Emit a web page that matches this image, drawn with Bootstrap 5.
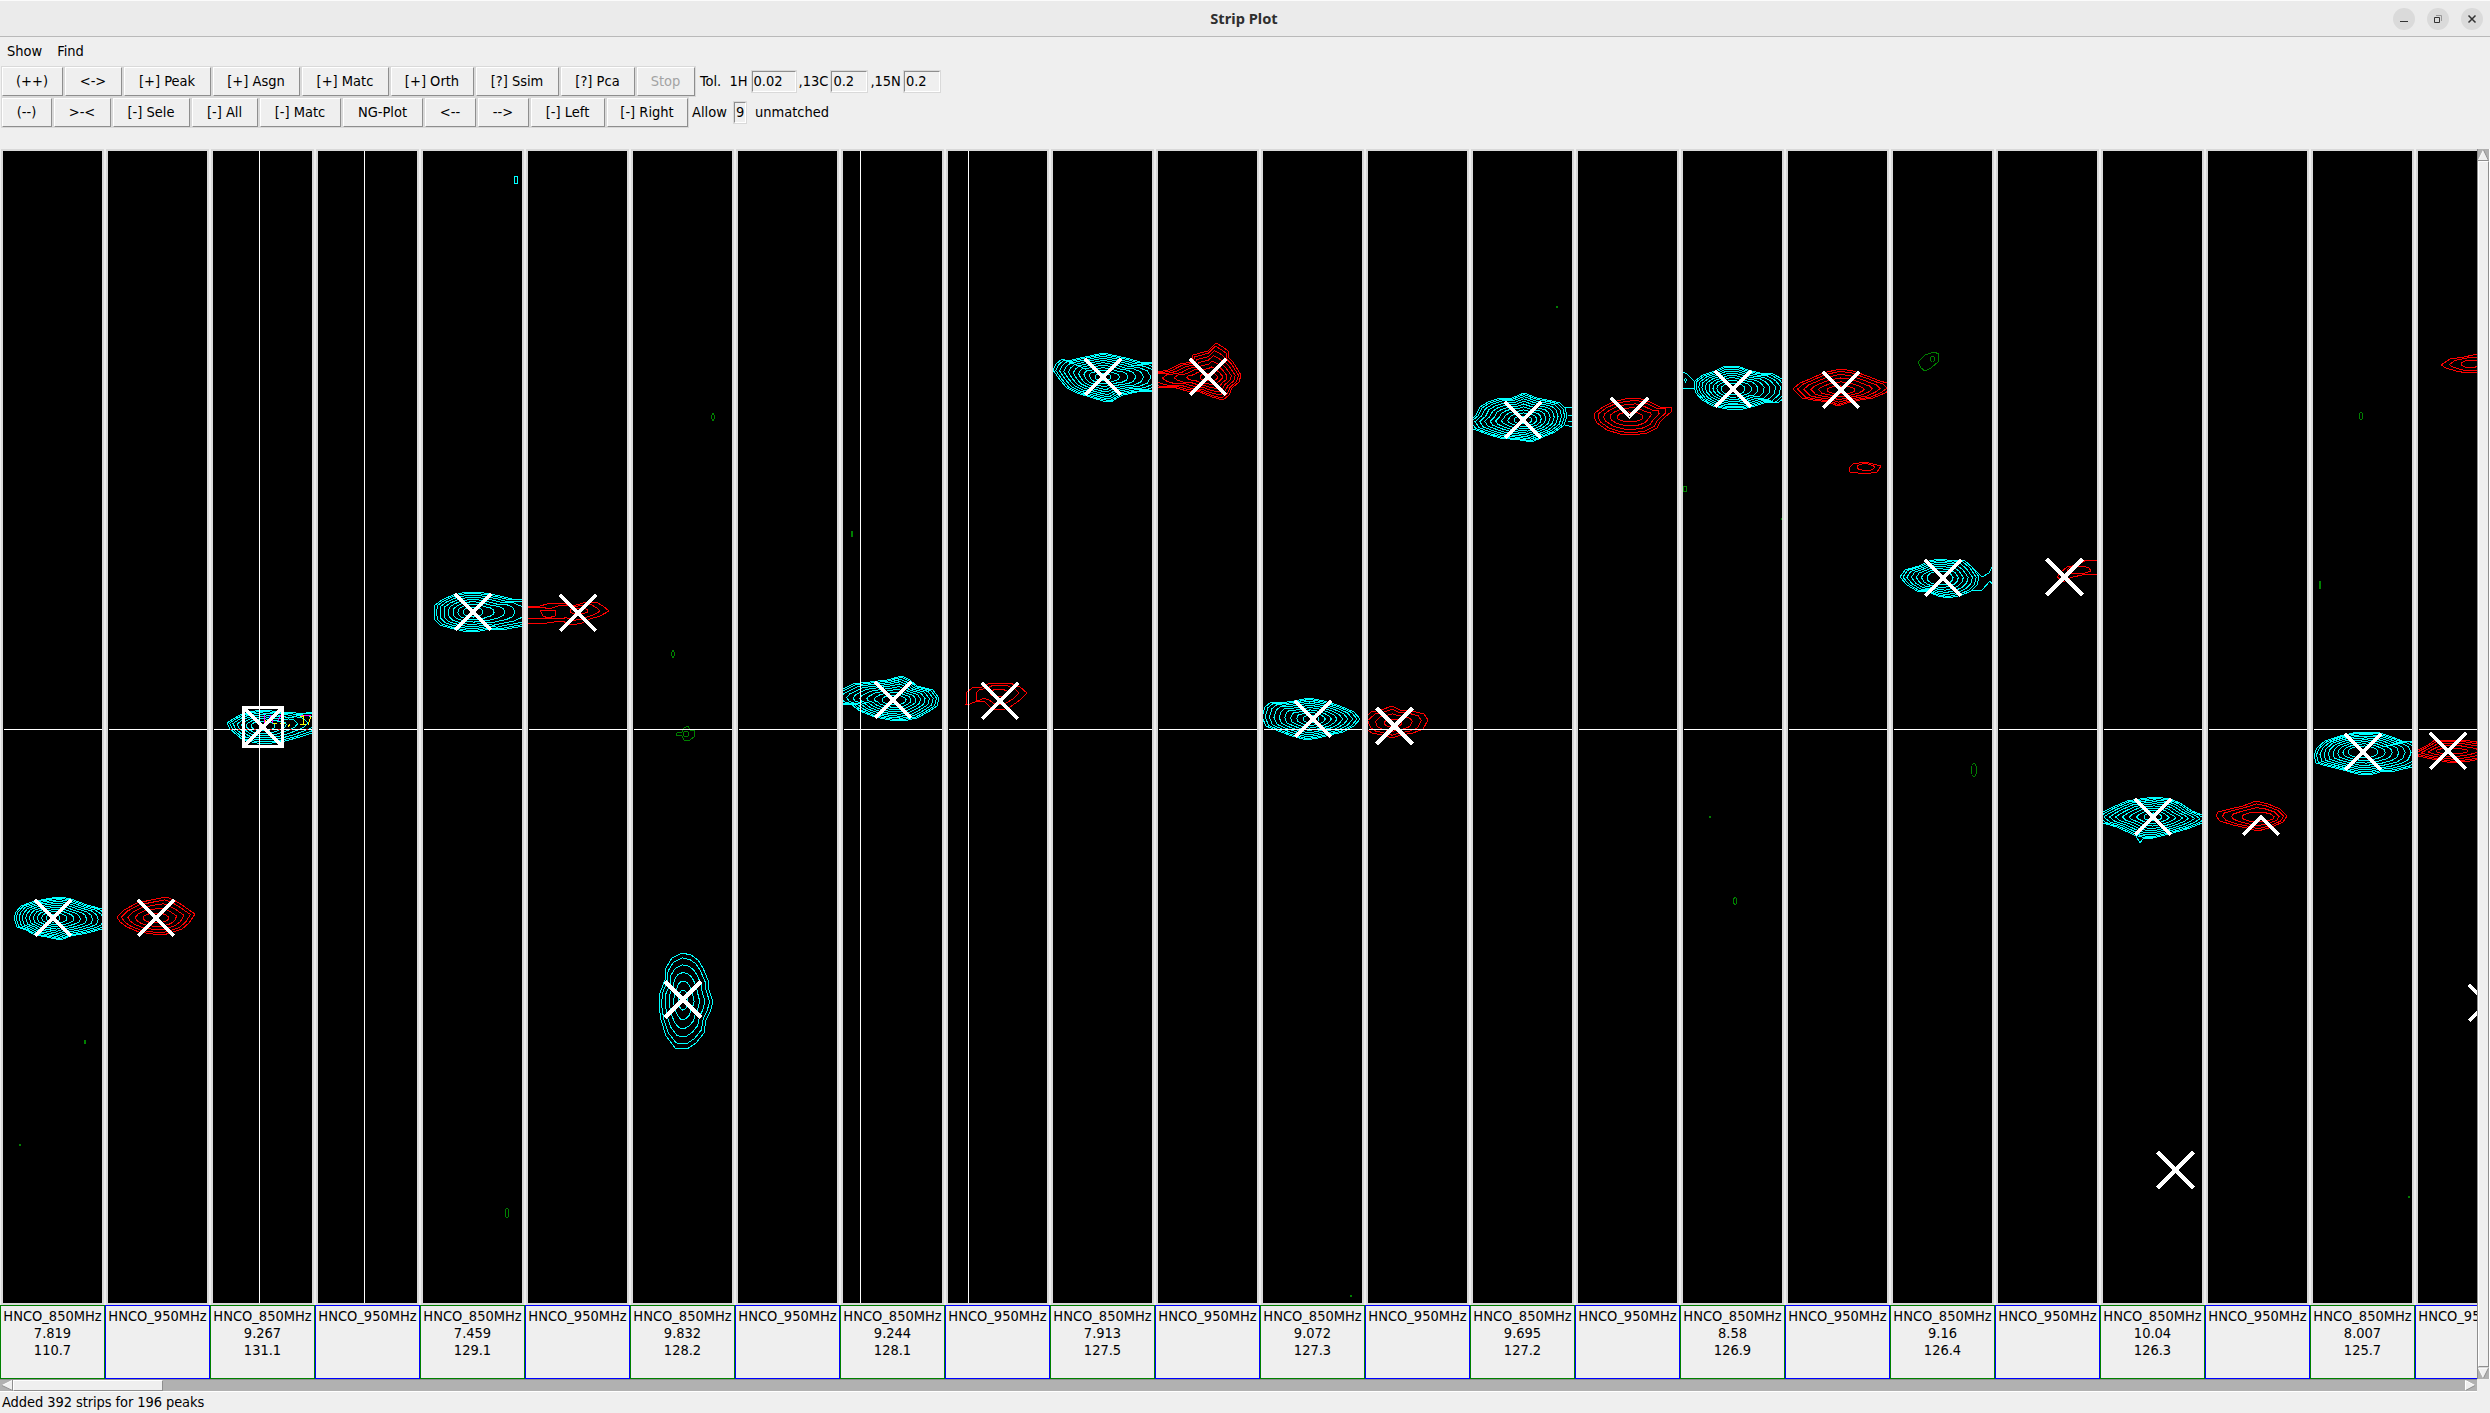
<!DOCTYPE html>
<html lang="en">
<head>
<meta charset="utf-8">
<title>Strip Plot</title>
<link href="https://cdn.jsdelivr.net/npm/bootstrap@5.3.0/dist/css/bootstrap.min.css" rel="stylesheet">
<style>
body{background:#efefef;color:#000;font:14.5px/17px "DejaVu Sans Condensed","DejaVu Sans",sans-serif;width:2490px;height:1413px;overflow:hidden}
.titlebar{height:37px;background:#ebebeb;border-top:1px solid #fbfbfb;border-bottom:1px solid #b9b9b9;padding:0 7px 0 0}
.title-text{font:bold 14.67px/33px "Noto Sans",sans-serif;color:#2f2f2f;padding:0 0 1px 95px}
.wbtn{width:22px;height:22px;background:#dadada}
.menus{height:29px;padding:0 0 0 7px;gap:15px}
.tools{height:31px;padding-left:1px}
.tkb{height:31px;border:1px solid #d9d9d9;background:#efefef;padding:0;flex:none}
.tkb>span{display:flex;height:29px;align-items:center;justify-content:center;border:1px solid;border-color:#fff #8e8e8e #8e8e8e #fff;padding:0 1px 0 0}
.tkb.off{color:#a3a3a3}
.w52{width:52px}.w53{width:53px}.w59{width:59px}.w60{width:60px}.w63{width:63px}.w68{width:68px}.w76{width:76px}.w79{width:79px}.w82{width:82px}.w83{width:83px}.w85{width:85px}.w89{width:89px}
.ent{height:23px;border:1px solid #d9d9d9;flex:none}
.ent>span{display:block;height:21px;line-height:19px;border:1px solid;border-color:#8e8e8e #fff #fff #8e8e8e;padding-left:1px}
.e1{width:46px}.e2{width:38px}.e3{width:14px}
.tol .ent{margin:0 2px}
.tol .e1{margin-left:3px}
.allow{margin-left:3px;margin-right:2px}
.work{margin-top:21px;height:1230px}
.strips{width:2477px;overflow:hidden}
.strip-col{width:105px}
.plot{width:103px;height:1156px;margin:0 1px;border:2px solid #d9d9d9;background:#000}
.plot svg{display:block}
.tag{height:74px;width:105px;border:1px solid #00f;padding-top:2px;white-space:nowrap;overflow:hidden}
.tag.k850{border-color:#008000}
.vbar{width:13px;background:#b1b1b1;border-left:1px solid #8e8e8e;border-right:1px solid #fff}
.vthumb{background:#efefef;border:1px solid;border-color:#fff #8e8e8e #8e8e8e #fff}
.hbar{height:13px;width:2477px;background:#b1b1b1;border-top:1px solid #8e8e8e;border-bottom:1px solid #fff}
.hthumb{width:150px;background:#efefef;border:1px solid;border-color:#fff #8e8e8e #8e8e8e #fff}
.status{padding:2px 0 0 2px;letter-spacing:-.08px}
svg{flex:none}
</style>
</head>
<body class="d-flex flex-column">
<header class="titlebar d-flex align-items-center">
  <div class="title-text flex-grow-1 text-center">Strip Plot</div>
  <div class="d-flex gap-2">
    <span class="wbtn rounded-circle me-1"><svg width="22" height="22" class="d-block"><path d="M7 13.5h8" stroke="#333"/></svg></span>
    <span class="wbtn rounded-circle me-1"><svg width="22" height="22" class="d-block" fill="none"><path d="M9 7.500h5.500v5.500" stroke="#999"/><path d="M7.500 9.500h5v5h-5z" stroke="#333"/></svg></span>
    <span class="wbtn rounded-circle"><svg width="22" height="22" class="d-block"><path d="M7.500 7.500l7 7m0-7l-7 7" stroke="#333" stroke-width="1.500"/></svg></span>
  </div>
</header>
<nav class="menus d-flex align-items-center"><span>Show</span><span>Find</span></nav>
<div class="tools tol d-flex align-items-center">
  <div class="tkb w63"><span>(++)</span></div><div class="tkb w59"><span>&lt;-&gt;</span></div><div class="tkb w89"><span>[+] Peak</span></div><div class="tkb w89"><span>[+] Asgn</span></div><div class="tkb w89"><span>[+] Matc</span></div><div class="tkb w85"><span>[+] Orth</span></div><div class="tkb w85"><span>[?] Ssim</span></div><div class="tkb w76"><span>[?] Pca</span></div><div class="tkb w60 off"><span>Stop</span></div>
  <span class="ms-1">Tol.&nbsp;</span><span class="ms-1">1H</span><div class="ent e1"><span>0.02</span></div><span>,13C</span><div class="ent e2"><span>0.2</span></div><span>,15N</span><div class="ent e2"><span>0.2</span></div>
</div>
<div class="tools d-flex align-items-center">
  <div class="tkb w52"><span>(--)</span></div><div class="tkb w59"><span>&gt;-&lt;</span></div><div class="tkb w79"><span>[-] Sele</span></div><div class="tkb w68"><span>[-] All</span></div><div class="tkb w83"><span>[-] Matc</span></div><div class="tkb w82"><span>NG-Plot</span></div><div class="tkb w53"><span>&lt;--</span></div><div class="tkb w53"><span>--&gt;</span></div><div class="tkb w76"><span>[-] Left</span></div><div class="tkb w83"><span>[-] Right</span></div>
  <span class="allow">Allow&nbsp;</span><div class="ent e3 me-1"><span>9</span></div><span class="ps-1">unmatched</span>
</div>
<main class="work d-flex">
  <div class="strips d-flex" id="strips"></div>
  <div class="vbar d-flex flex-column">
    <svg width="11" height="12"><path d="M5.500 1L10.500 11H.5z" fill="#efefef"/><path d="M5.500 1L.5 11" stroke="#fff"/><path d="M5.500 1l5 10.500H0" fill="none" stroke="#8e8e8e"/></svg>
    <div class="vthumb flex-grow-1"></div>
    <svg width="11" height="12"><path d="M.5 1h10L5.500 11z" fill="#efefef"/><path d="M10.500 1H.5L5.500 11" fill="none" stroke="#fff"/><path d="M10.500 1L5.500 11" stroke="#8e8e8e"/></svg>
  </div>
</main>
<div class="hbar d-flex">
  <svg width="13" height="11"><path d="M2 5.500L12 .5v10z" fill="#efefef"/><path d="M2 5.500L12 .5" stroke="#fff"/><path d="M12.500 0v10.500L2 5.500" fill="none" stroke="#8e8e8e"/></svg>
  <div class="hthumb"></div>
  <svg width="13" height="11" class="ms-auto"><path d="M1.500 .5v10L11 5.500z" fill="#efefef"/><path d="M11 5.500L1.500 .5v10" fill="none" stroke="#fff"/><path d="M1.500 10.500L11 5.500" stroke="#8e8e8e"/></svg>
</div>
<footer class="status">Added 392 strips for 196 peaks</footer>
<script src="https://cdn.jsdelivr.net/npm/bootstrap@5.3.0/dist/js/bootstrap.bundle.min.js"></script>
<script>
const C='#00ffff',R='#ff0000',G='#008000';
const tags=[['7.819','110.7'],['9.267','131.1'],['7.459','129.1'],['9.832','128.2'],['9.244','128.1'],['7.913','127.5'],['9.072','127.3'],['9.695','127.2'],['8.58','126.9'],['9.16','126.4'],['10.04','126.3'],['8.007','125.7']];
// Peaks: strip, colour, level count, centre, innermost radii, outermost level
const peaks=[
[0,C,10,[53,918],[7,4],'14,918 16,912 21,906 35,901 52,898 61,897 71,899 87,905 102,909 109,914 111,920 109,926 102,929 87,933 71,936 60,940 47,937 35,935 26,930 17,927'],
[1,R,5,[156,918],[13,5],'117,917 124,910 137,903 156,899 166,897 174,900 182,905 195,914 189,923 182,929 170,933 163,935 153,934 139,932 127,927 120,922'],
[2,C,7,[263,726],[12,5],'227,723 233,719 240,715 250,712 260,710 272,711 283,713 292,712 300,714 312,712 325,714 332,721 325,728 312,733 300,737 285,741 272,743 257,743 243,740 237,735 230,729'],
[4,C,8,[473,612],[10,5],'434,613 435,605 442,600 453,595 467,592 477,592 490,594 500,596 512,599 530,599 542,604 547,612 542,620 530,625 512,628 502,630 490,629 475,632 463,631 450,628 440,625 435,620'],
[5,R,3,[579,611],[9,3],'480,604 525,606 537,607 550,603 563,603 573,606 583,603 596,602 603,606 609,611 600,616 590,619 582,623 572,625 562,621 547,623 528,623 480,624'],
[6,C,6,[683,1000],[5,10],'659,1005 660,993 665,980 666,968 672,958 682,953 691,955 698,960 703,968 708,980 709,990 713,1002 710,1012 706,1020 704,1033 696,1043 687,1049 675,1048 666,1036 661,1020'],
[8,C,9,[894,700],[12,5],'832,697 836,692 843,689 853,684 870,682 887,680 902,676 910,680 917,686 933,690 939,698 937,706 928,712 917,718 903,721 890,720 875,717 860,711 852,705 843,704 836,702'],
[9,R,3,[999,693],[9,4],'966,704 967,692 972,688 982,687 990,683 1010,683 1020,687 1027,693 1020,700 1010,707 1002,710 992,709 985,702 977,701 970,704'],
[10,C,10,[1103,377],[8,4],'1053,370 1056,364 1062,359 1068,361 1080,358 1090,356 1103,353 1117,356 1130,359 1140,362 1155,363 1168,368 1174,377 1168,386 1155,391 1137,392 1123,395 1117,398 1111,402 1103,401 1090,397 1077,393 1067,388 1060,380'],
[11,R,7,[1209,377],[9,4],'1135,379 1143,373 1158,372 1168,370 1180,364 1192,362 1193,355 1208,351 1216,343 1223,347 1228,351 1228,357 1233,362 1241,375 1239,382 1232,388 1229,395 1223,400 1212,397 1200,392 1187,391 1173,387 1158,388 1143,384'],
[12,C,9,[1311,719],[8,4],'1262,717 1265,707 1271,702 1280,703 1294,701 1309,698 1324,701 1340,706 1354,712 1360,719 1354,726 1343,732 1330,735 1318,738 1307,740 1292,736 1278,731 1266,726'],
[13,R,4,[1393,723],[9,4],'1362,720 1371,712 1381,710 1392,706 1400,710 1412,711 1424,714 1428,720 1423,729 1413,733 1401,735 1392,738 1382,735 1372,733 1366,729'],
[14,C,10,[1523,420],[9,4],'1468,422 1476,415 1480,407 1488,402 1500,398 1512,398 1524,393 1537,398 1552,401 1560,403 1565,408 1567,416 1564,425 1555,432 1543,437 1532,442 1520,440 1500,438 1487,434 1473,429'],
[15,R,5,[1630,417],[13,5],'1594,417 1595,413 1603,407 1613,402 1625,399 1638,398 1650,402 1660,407 1671,407 1671,412 1665,417 1660,422 1657,428 1647,433 1633,435 1620,434 1607,430 1597,423'],
[16,C,9,[1733,389],[12,6],'1694,387 1695,381 1703,375 1715,371 1725,366 1737,366 1748,370 1760,373 1773,374 1782,379 1788,386 1787,395 1778,403 1767,402 1755,406 1743,409 1727,409 1713,406 1702,400 1696,393'],
[17,R,6,[1841,390],[14,4],'1793,389 1800,383 1810,379 1823,373 1840,369 1853,371 1867,376 1880,381 1887,383 1892,388 1885,393 1873,398 1860,400 1847,403 1838,406 1828,402 1813,400 1802,398'],
[17,R,2,[1866,467],[9,4],'1849,468 1853,464 1865,462 1881,466 1877,472 1865,474 1850,472'],
[18,C,7,[1940,578],[13,7],'1900,577 1905,570 1919,566 1929,561 1940,559 1954,561 1964,560 1972,567 1979,577 1977,585 1971,591 1962,595 1949,598 1938,596 1929,592 1917,591 1907,585'],
[19,R,2,[2079,570],[12,4],'2057,577 2061,572 2067,567 2078,565 2086,560 2110,561 2110,574 2082,575 2073,577 2067,579 2064,582'],
[20,C,9,[2153,817],[9,4],'2095,817 2103,812 2113,807 2127,801 2140,799 2155,797 2170,799 2180,803 2192,811 2202,815 2208,819 2202,823 2190,828 2173,833 2153,838 2142,837 2134,835 2117,827 2103,823'],
[21,R,4,[2258,817],[16,5],'2216,816 2218,812 2230,809 2243,806 2256,801 2268,804 2280,809 2287,816 2283,822 2272,827 2258,831 2247,828 2233,825 2220,821'],
[22,C,9,[2363,752],[15,6],'2314,755 2317,748 2325,741 2340,736 2353,733 2367,732 2380,733 2392,737 2402,741 2412,741 2421,745 2425,753 2421,762 2412,767 2395,771 2380,772 2370,775 2358,774 2343,770 2327,766 2316,763'],
[23,R,5,[2452,751],[16,3],'2410,754 2420,749 2428,745 2435,740 2450,740 2463,740 2490,744 2510,749 2490,757 2470,761 2452,763 2437,760 2427,758'],
[23,R,3,[2471,364],[10,4],'2441,365 2450,359 2464,357 2473,355 2490,354 2490,372 2467,373 2456,371 2446,368'],
[18,G,1,[0,0],[0,0],'1918,362 1925,355 1934,352 1939,354 1938,362 1931,368 1925,371 1921,368'],
[6,G,2,[686,734],[3,3],'677,733 682,732 684,728 688,726 690,730 695,731 694,737 690,740 684,740 682,736 676,735']
];
// Isolated small contours: strip, colour, x, y, rx, ry
const specks=[[18,G,1932.5,359,2,3],[22,G,2361,416,2,3.5],[22,G,2320,585,.7,4],[16,G,1685,489,2,2.5],[8,G,852,534,1,3],[4,C,516,180,2,4],[6,G,713,417,1.2,3.500],[6,G,673,654,1.2,3.500],[4,G,507,1213,2,4.500],[18,G,1974,770,2.5,6.500],[16,G,1735,901,1.500,3.500],[0,G,85,1042,.8,2],[14,G,1557,307,.5,.5],[16,G,1710,817,.5,.5],[16,G,1782,519,.4,.4],[0,G,20,1145,.4,.4],[12,G,1351,1296,.5,.5],[22,G,2409,1197,.4,.4],[16,C,1685.5,380,.6,2]];
const extra={5:`<path d="M540 610h15v6l-7 2l-5-2z" stroke="${R}"/>`,
14:`<path d="M1565 407h10M1568 415h8M1568 421h8M1565 425l8 2" stroke="${C}"/>`,
16:`<path d="M1683 372l4 2l3 3l4 4M1683 388l11 1" stroke="${C}"/>`,
18:`<path d="M1964 560l9 8l9 9l7-4l3-6M1971 590h11l8-9l2 3" stroke="${C}"/>`,
20:`<path d="M2136 836l4 7l3-4l10-1" stroke="${C}"/>`,
2:'<path d="M264 715v8m6-8l3 8m5-2l4-8M301 715h10" stroke="#f0f"/><path d="M269 716v7" stroke="#00f"/><path d="M265 720v5m8-2h4m3 0h5m5 1l-2 3M300 717l3-1v8m-3 0h6m2 1l3-9" stroke="#ff0"/><path d="M230 729.500h50m10 0h8m8 0h4" stroke="#f44" stroke-dasharray="2 6"/>'};
const crosses=[[0,53,918],[1,156,918],[2,263,727],[4,473,612],[5,578,613],[6,683,999.5],[8,893,700],[9,1000,701],[10,1103,377],[11,1208,377],[12,1313,719],[13,1394.5,726],[14,1523,420],[16,1733,389],[17,1841,390],[18,1943,578],[19,2064.5,577],[20,2153,817],[20,2175.5,1170],[22,2363,752],[23,2448,751],[23,2487,1003]];
const chevrons=[[15,'M1611 398l18.500 18.500L1648 398'],[21,'M2243 835l18-18l18 18']];
const cursors={2:259,3:364,8:860,9:968};

// Levels sit close together at the rim and spread out towards the summit
function rings([,col,n,c,r,s]){
  const pts=s.split(' ').map(p=>p.split(',').map(Number));
  let out='';
  for(let k=0;k<n;k++){
    const t=n>1?Math.pow(k/(n-1),1.25):0;
    const d=pts.map(([x,y])=>{
      const a=Math.atan2((y-c[1])*2,x-c[0]);
      return (x*(1-t)+(c[0]+Math.cos(a)*r[0])*t).toFixed(1)+','+(y*(1-t)+(c[1]+Math.sin(a)*r[1])*t).toFixed(1);
    });
    out+=`<polygon points="${d.join(' ')}" stroke="${col}"/>`;
  }
  return out;
}
let html='';
for(let i=0;i<24;i++){
  const x0=105*i+3;
  let g=peaks.filter(p=>p[0]===i).map(rings).join('');
  g+=specks.filter(p=>p[0]===i).map(p=>`<ellipse cx="${p[2]}" cy="${p[3]}" rx="${p[4]}" ry="${p[5]}" stroke="${p[1]}"/>`).join('');
  g+=`<path d="M${x0+1} 729.500H${x0+99}" stroke="#fff"/>`;
  if(cursors[i])g+=`<path d="M${cursors[i]+.5} 151V1303" stroke="#fff"/>`;
  g+=extra[i]||'';
  g+='<g stroke="#fff" stroke-width="4">';
  g+=crosses.filter(p=>p[0]===i).map(p=>`<path d="M${p[1]-18} ${p[2]-18}l36 36m0-36l-36 36"/>`).join('');
  g+=chevrons.filter(p=>p[0]===i).map(p=>`<path d="${p[1]}"/>`).join('');
  if(i===2)g+='<rect x="243.500" y="707.500" width="39" height="39" stroke-width="3"/>';
  g+='</g>';
  const even=i%2===0,t=tags[i>>1];
  html+=`<div class="strip-col flex-shrink-0"><div class="plot"><svg width="99" height="1152" viewBox="${x0} 151 99 1152" fill="none" shape-rendering="crispEdges">${g}</svg></div><div class="tag text-center ${even?'k850':'k950'}">HNCO_${even?850:950}MHz${even?`<br>${t[0]}<br>${t[1]}`:''}</div></div>`;
}
document.getElementById('strips').innerHTML=html;
</script>
</body>
</html>
